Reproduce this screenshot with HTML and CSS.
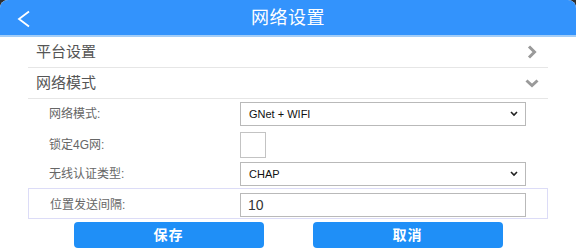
FILE: index.html
```html
<!DOCTYPE html>
<html lang="zh-CN">
<head>
  <meta charset="UTF-8">
  <meta name="viewport" content="width=device-width, initial-scale=1.0">
  <title>网络设置</title>
  <link rel="stylesheet" href="styles.css">
</head>
<body>

  <div class="page">
    <div class="title-bar">
      <a class="back" href="#">
        <svg width="14" height="18" viewBox="0 0 14 18"><path d="M12 1.5 L2 9 L12 16.5" fill="none" stroke="#fff" stroke-width="1.8"/></svg>
      </a>
      <h1 class="title">网络设置</h1>
    </div>

    <div class="content">
      <div class="section-head">
        <span>平台设置</span>
        <svg class="arrow-right" width="10" height="14" viewBox="0 0 10 14"><path d="M2 1.5 L7.5 7 L2 12.5" fill="none" stroke="#9a9a9a" stroke-width="3"/></svg>
      </div>
      <div class="section-head">
        <span>网络模式</span>
        <svg class="arrow-down" width="14" height="9" viewBox="0 0 14 9"><path d="M1.5 1.5 L7 6.5 L12.5 1.5" fill="none" stroke="#9a9a9a" stroke-width="3"/></svg>
      </div>

      <div class="form">
        <div class="form-row row-first">
          <label class="label">网络模式:</label>
          <div class="select-wrap">
            <select class="select">
              <option>GNet + WIFI</option>
            </select>
            <svg class="select-arrow" width="8" height="6" viewBox="0 0 8 6"><path d="M1 1 L4 4 L7 1" fill="none" stroke="#222" stroke-width="1.6"/></svg>
          </div>
        </div>
        <div class="form-row row-check">
          <label class="label">锁定4G网:</label>
          <input class="check" type="checkbox">
        </div>
        <div class="form-row row-third">
          <label class="label">无线认证类型:</label>
          <div class="select-wrap">
            <select class="select">
              <option>CHAP</option>
            </select>
            <svg class="select-arrow" width="8" height="6" viewBox="0 0 8 6"><path d="M1 1 L4 4 L7 1" fill="none" stroke="#222" stroke-width="1.6"/></svg>
          </div>
        </div>
        <div class="form-row row-active">
          <label class="label">位置发送间隔:</label>
          <input class="text-input" type="text" value="10">
        </div>
      </div>

      <div class="buttons">
        <button class="btn">保存</button>
        <button class="btn">取消</button>
      </div>
    </div>
  </div>

</body>
</html>
```

FILE: styles.css
```css
* {
  margin: 0;
  padding: 0;
  box-sizing: border-box;
  font-family: "Liberation Sans", "Noto Sans CJK SC", sans-serif;
}

html {
  background: #2e2e2e;
}

body {
  margin: 0;
}

.page {
  background: #fff;
  border-radius: 8px 8px 0 0;
  min-height: 248px;
  overflow: hidden;
}

.title-bar {
  height: 37px;
  background: #3393fc;
  border-bottom: 2px solid #a3cdf7;
  display: flex;
  align-items: center;
  justify-content: center;
  position: relative;
}

.back {
  position: absolute;
  left: 17px;
  top: 10px;
  display: block;
  line-height: 0;
}

.title {
  color: #fff;
  font-size: 18px;
  font-weight: normal;
  line-height: 22px;
  letter-spacing: 0.5px;
}

.content {
  margin: 0 28px;
  border-bottom: 1px solid #ececec;
}

.section-head {
  height: 31px;
  display: flex;
  align-items: center;
  justify-content: space-between;
  padding: 0 9px 0 8px;
  border-bottom: 1px solid #e6e6e6;
  color: #555;
  font-size: 15px;
  line-height: 20px;
}

.section-head .arrow-right {
  margin-right: 2px;
}

.form-row {
  display: flex;
  align-items: center;
  padding: 3px 0;
}

.row-first {
  padding-top: 3px;
}

.row-check {
  padding: 3px 0 1px;
}

.row-third {
  padding: 3px 0 2px;
}

.row-active {
  height: 31px;
  border: 1px solid #dcdcf7;
  padding: 3px 0 0;
  margin-right: 0;
}

.label {
  width: 212px;
  padding-left: 21px;
  color: #666;
  font-size: 12px;
  line-height: 16px;
}

.row-active .label {
  width: 211px;
}

.select-wrap {
  position: relative;
  width: 286px;
  height: 24px;
}

.select {
  -webkit-appearance: none;
  appearance: none;
  width: 100%;
  height: 24px;
  border: 1px solid #b9b9b9;
  border-radius: 0;
  background: #fff;
  padding: 0 8px;
  font-size: 11px;
  color: #111;
  outline: none;
}

.select-arrow {
  position: absolute;
  right: 8px;
  top: 9px;
}

.check {
  -webkit-appearance: none;
  appearance: none;
  width: 26px;
  height: 26px;
  border: 1px solid #c3c3c3;
  background: #fff;
  margin: 0;
}

.text-input {
  width: 286px;
  height: 24px;
  border: 1px solid #b9b9b9;
  padding: 0 7px;
  font-size: 14px;
  color: #333;
  outline: none;
}

.buttons {
  display: flex;
  justify-content: center;
  gap: 49px;
  padding: 3px 0 1px;
}

.btn {
  -webkit-appearance: none;
  width: 190px;
  height: 26px;
  border: none;
  border-radius: 4px;
  background: #1f8ff7;
  color: #fff;
  font-size: 14px;
  font-weight: bold;
  line-height: 20px;
  letter-spacing: 1px;
  cursor: pointer;
}
```
